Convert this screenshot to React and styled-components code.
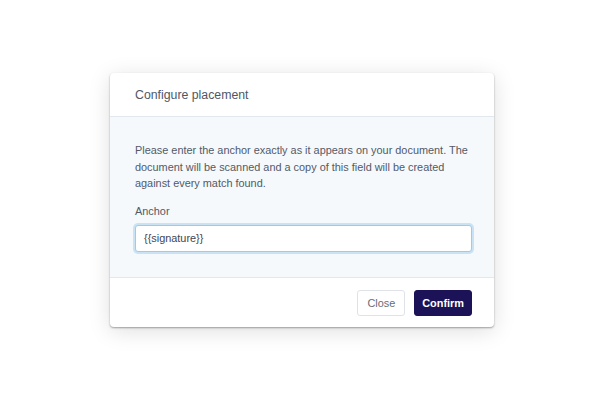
import React from "react";
import styled, { createGlobalStyle } from "styled-components";

const Global = createGlobalStyle`
  html, body { margin: 0; padding: 0; background: #ffffff; }
  body { font-family: "Liberation Sans", Arial, sans-serif; }
  * { box-sizing: border-box; }
`;

const Page = styled.div`
  width: 604px;
  height: 401px;
  display: flex;
  justify-content: center;
  padding-top: 73px;
`;

const Modal = styled.div`
  width: 384px;
  height: 254px;
  background: #ffffff;
  border-radius: 4px;
  box-shadow: 0 1px 2px rgba(0, 0, 0, 0.35), 0 4px 22px rgba(0, 0, 0, 0.13);
  display: flex;
  flex-direction: column;
  overflow: hidden;
`;

const Header = styled.div`
  height: 44px;
  padding: 0 25px;
  display: flex;
  align-items: center;
  border-bottom: 1px solid #e3e8ee;
  font-size: 12.3px;
  color: #4f5766;
`;

const Body = styled.div`
  background: #f5f9fc;
  padding: 25px 22px 24px 25px;
  border-bottom: 1px solid #e3e8ee;
  height: 161px;
`;

const Text = styled.p`
  margin: 0;
  font-size: 10.9px;
  line-height: 16.5px;
  color: #525a68;
`;

const Label = styled.div`
  margin-top: 12px;
  font-size: 10.9px;
  color: #525a68;
  line-height: 14px;
`;

const Input = styled.input`
  margin-top: 7px;
  display: block;
  width: 337px;
  height: 27px;
  border: 1px solid #9ecbe8;
  border-radius: 3px;
  box-shadow: 0 0 0 2px #c9e2f4;
  padding: 0 8px;
  font-family: inherit;
  font-size: 10.9px;
  color: #3f4653;
  background: #ffffff;
  outline: none;
`;

const Footer = styled.div`
  flex: 1;
  display: flex;
  justify-content: flex-end;
  align-items: center;
  gap: 9px;
  padding: 1px 22px 0 0;
`;

const Button = styled.button`
  height: 26px;
  padding: 0 ${(p) => (p.$primary ? "7px" : "9px")};
  border-radius: 3px;
  font-family: inherit;
  font-size: 10.9px;
  border: 1px solid ${(p) => (p.$primary ? "#1b1257" : "#dfe3e8")};
  background: ${(p) => (p.$primary ? "#1b1257" : "#ffffff")};
  color: ${(p) => (p.$primary ? "#ffffff" : "#666d78")};
  font-weight: ${(p) => (p.$primary ? "bold" : "normal")};
  cursor: pointer;
`;

export default function App() {
  return (
    <>
      <Global />
      <Page>
        <Modal>
          <Header>Configure placement</Header>
          <Body>
            <Text>
              Please enter the anchor exactly as it appears on your document. The
              document will be scanned and a copy of this field will be created
              against every match found.
            </Text>
            <Label>Anchor</Label>
            <Input defaultValue="{{signature}}" />
          </Body>
          <Footer>
            <Button>Close</Button>
            <Button $primary>Confirm</Button>
          </Footer>
        </Modal>
      </Page>
    </>
  );
}
